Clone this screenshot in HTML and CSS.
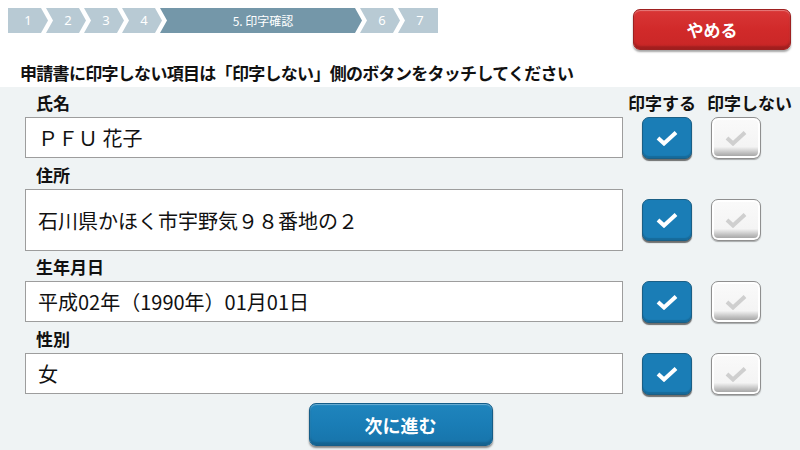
FILE: index.html
```html
<!DOCTYPE html>
<html lang="ja">
<head>
<meta charset="utf-8">
<title>印字確認</title>
<link rel="stylesheet" href="styles.css">
</head>
<body>
<header class="top">
  <ol class="steps">
    <li class="step first">1</li>
    <li class="step">2</li>
    <li class="step">3</li>
    <li class="step">4</li>
    <li class="step active">5. 印字確認</li>
    <li class="step">6</li>
    <li class="step last">7</li>
  </ol>
  <button class="btn btn-cancel">やめる</button>
</header>
<h1 class="title">申請書に印字しない項目は「印字しない」側のボタンをタッチしてください</h1>
<main class="panel">
  <div class="grid">
    <div class="label">氏名</div>
    <div class="colhead head-on">印字する</div>
    <div class="colhead head-off">印字しない</div>

    <div class="field">ＰＦＵ 花子</div>
    <div class="cb cb-on"><svg viewBox="0 0 24 16"><path d="M3 8 L9 13.5 L21 2.5"/></svg></div>
    <div class="cb cb-off"><svg viewBox="0 0 24 16"><path d="M3 8 L9 13.5 L21 2.5"/></svg></div>

    <div class="label">住所</div>
    <div></div><div></div>
    <div class="field tall">石川県かほく市宇野気９８番地の２</div>
    <div class="cb cb-on"><svg viewBox="0 0 24 16"><path d="M3 8 L9 13.5 L21 2.5"/></svg></div>
    <div class="cb cb-off"><svg viewBox="0 0 24 16"><path d="M3 8 L9 13.5 L21 2.5"/></svg></div>

    <div class="label">生年月日</div>
    <div></div><div></div>
    <div class="field">平成02年（1990年）01月01日</div>
    <div class="cb cb-on"><svg viewBox="0 0 24 16"><path d="M3 8 L9 13.5 L21 2.5"/></svg></div>
    <div class="cb cb-off"><svg viewBox="0 0 24 16"><path d="M3 8 L9 13.5 L21 2.5"/></svg></div>

    <div class="label">性別</div>
    <div></div><div></div>
    <div class="field">女</div>
    <div class="cb cb-on"><svg viewBox="0 0 24 16"><path d="M3 8 L9 13.5 L21 2.5"/></svg></div>
    <div class="cb cb-off"><svg viewBox="0 0 24 16"><path d="M3 8 L9 13.5 L21 2.5"/></svg></div>
  </div>
  <button class="btn btn-next">次に進む</button>
</main>
</body>
</html>
```
FILE: styles.css
```css
* { box-sizing: border-box; }
html, body {
  margin: 0;
  width: 800px;
  height: 450px;
  overflow: hidden;
  background: #ffffff;
  font-family: "Noto Sans CJK JP", "Noto Sans", sans-serif;
  color: #111;
}
.top {
  display: flex;
  justify-content: space-between;
  align-items: flex-start;
  padding: 8px 9px 0 8px;
  height: 50px;
}
.steps {
  display: flex;
  margin: 0;
  padding: 0;
  list-style: none;
}
.step {
  width: 40px;
  height: 25px;
  margin-left: -2px;
  background: #b8cad4;
  color: #fff;
  font-family: "Noto Sans", "Noto Sans CJK JP", sans-serif;
  font-size: 13px;
  line-height: 25px;
  text-align: center;
  padding-left: 4px;
  clip-path: polygon(0 0, calc(100% - 7px) 0, 100% 50%, calc(100% - 7px) 100%, 0 100%, 7px 50%);
}
.step.first {
  margin-left: 0;
  padding-left: 0;
  clip-path: polygon(0 0, calc(100% - 7px) 0, 100% 50%, calc(100% - 7px) 100%, 0 100%);
}
.step.last {
  clip-path: polygon(0 0, 100% 0, 100% 100%, 0 100%, 7px 50%);
}
.step.active {
  width: 202px;
  background: #7497a9;
  font-family: "Noto Sans CJK JP", sans-serif;
  font-size: 12px;
}
.btn {
  border: none;
  color: #fff;
  font-family: "Noto Sans CJK JP", sans-serif;
  font-weight: 700;
  font-size: 18px;
  border-radius: 7px;
  padding: 0;
}
.btn-cancel {
  margin-top: 1px;
  width: 158px;
  height: 41px;
  background: linear-gradient(#d93636, #d12a2a 50%, #c92626);
  border: 1px solid #9e2020;
  box-shadow: inset 0 1px 1px rgba(255,255,255,0.35), inset 0 -3px 2px rgba(0,0,0,0.2), 0 2px 2px rgba(0,0,0,0.35);
  font-size: 17px;
}
.title {
  margin: 11px 0 2px 20px;
  font-size: 17px;
  letter-spacing: -0.7px;
  line-height: 24px;
  font-weight: 700;
  color: #111;
}
.panel {
  background: #eff3f4;
  height: 363px;
  padding: 0 0 0 25px;
}
.grid {
  display: grid;
  grid-template-columns: 598px 50px 51px;
  column-gap: 19px;
}
.label {
  height: 30px;
  padding: 5px 0 0 11px;
  font-size: 17px;
  font-weight: 700;
  line-height: 22px;
}
.colhead {
  height: 30px;
  padding-top: 5px;
  font-size: 17px;
  font-weight: 700;
  line-height: 22px;
  white-space: nowrap;
}
.head-on { margin-left: -14px; }
.head-off { margin-left: -4px; }
.field {
  height: 41px;
  background: #fff;
  border: 1px solid #9d9d9d;
  padding-left: 12px;
  display: flex;
  align-items: center;
  font-size: 20px;
  color: #111;
}
.field.tall { height: 62px; }
.cb {
  align-self: center;
  width: 50px;
  height: 42px;
  border-radius: 7px;
  display: flex;
  align-items: center;
  justify-content: center;
}
.cb svg {
  width: 24px;
  height: 16px;
  fill: none;
  stroke-width: 4;
  stroke-linecap: butt;
  stroke-linejoin: miter;
}
.cb-on {
  background: #1a7db6;
  border: 1px solid #1a5f86;
  box-shadow: inset 0 -2px 1px rgba(0,0,0,0.15), 0 2px 1px rgba(0,0,0,0.55);
}
.cb-on svg { stroke: #fff; }
.cb-off {
  background: linear-gradient(#fafafa, #f4f4f4 72%, #bdbdbd 88%, #9a9a9a);
  border: 1px solid #8f8f8f;
  box-shadow: inset 0 0 0 2px #fff, 0 1px 1px rgba(0,0,0,0.3);
}
.cb-off svg { stroke: #cfcfcf; }
.btn-next {
  display: block;
  margin: 8px auto 0;
  transform: translateX(-12px);
  width: 184px;
  height: 43px;
  background: linear-gradient(#1f85bd, #1a7db6 50%, #1774aa);
  border: 1px solid #155d88;
  box-shadow: inset 0 1px 1px rgba(255,255,255,0.35), inset 0 -3px 2px rgba(0,0,0,0.15), 0 2px 2px rgba(0,0,0,0.45);
}
```
